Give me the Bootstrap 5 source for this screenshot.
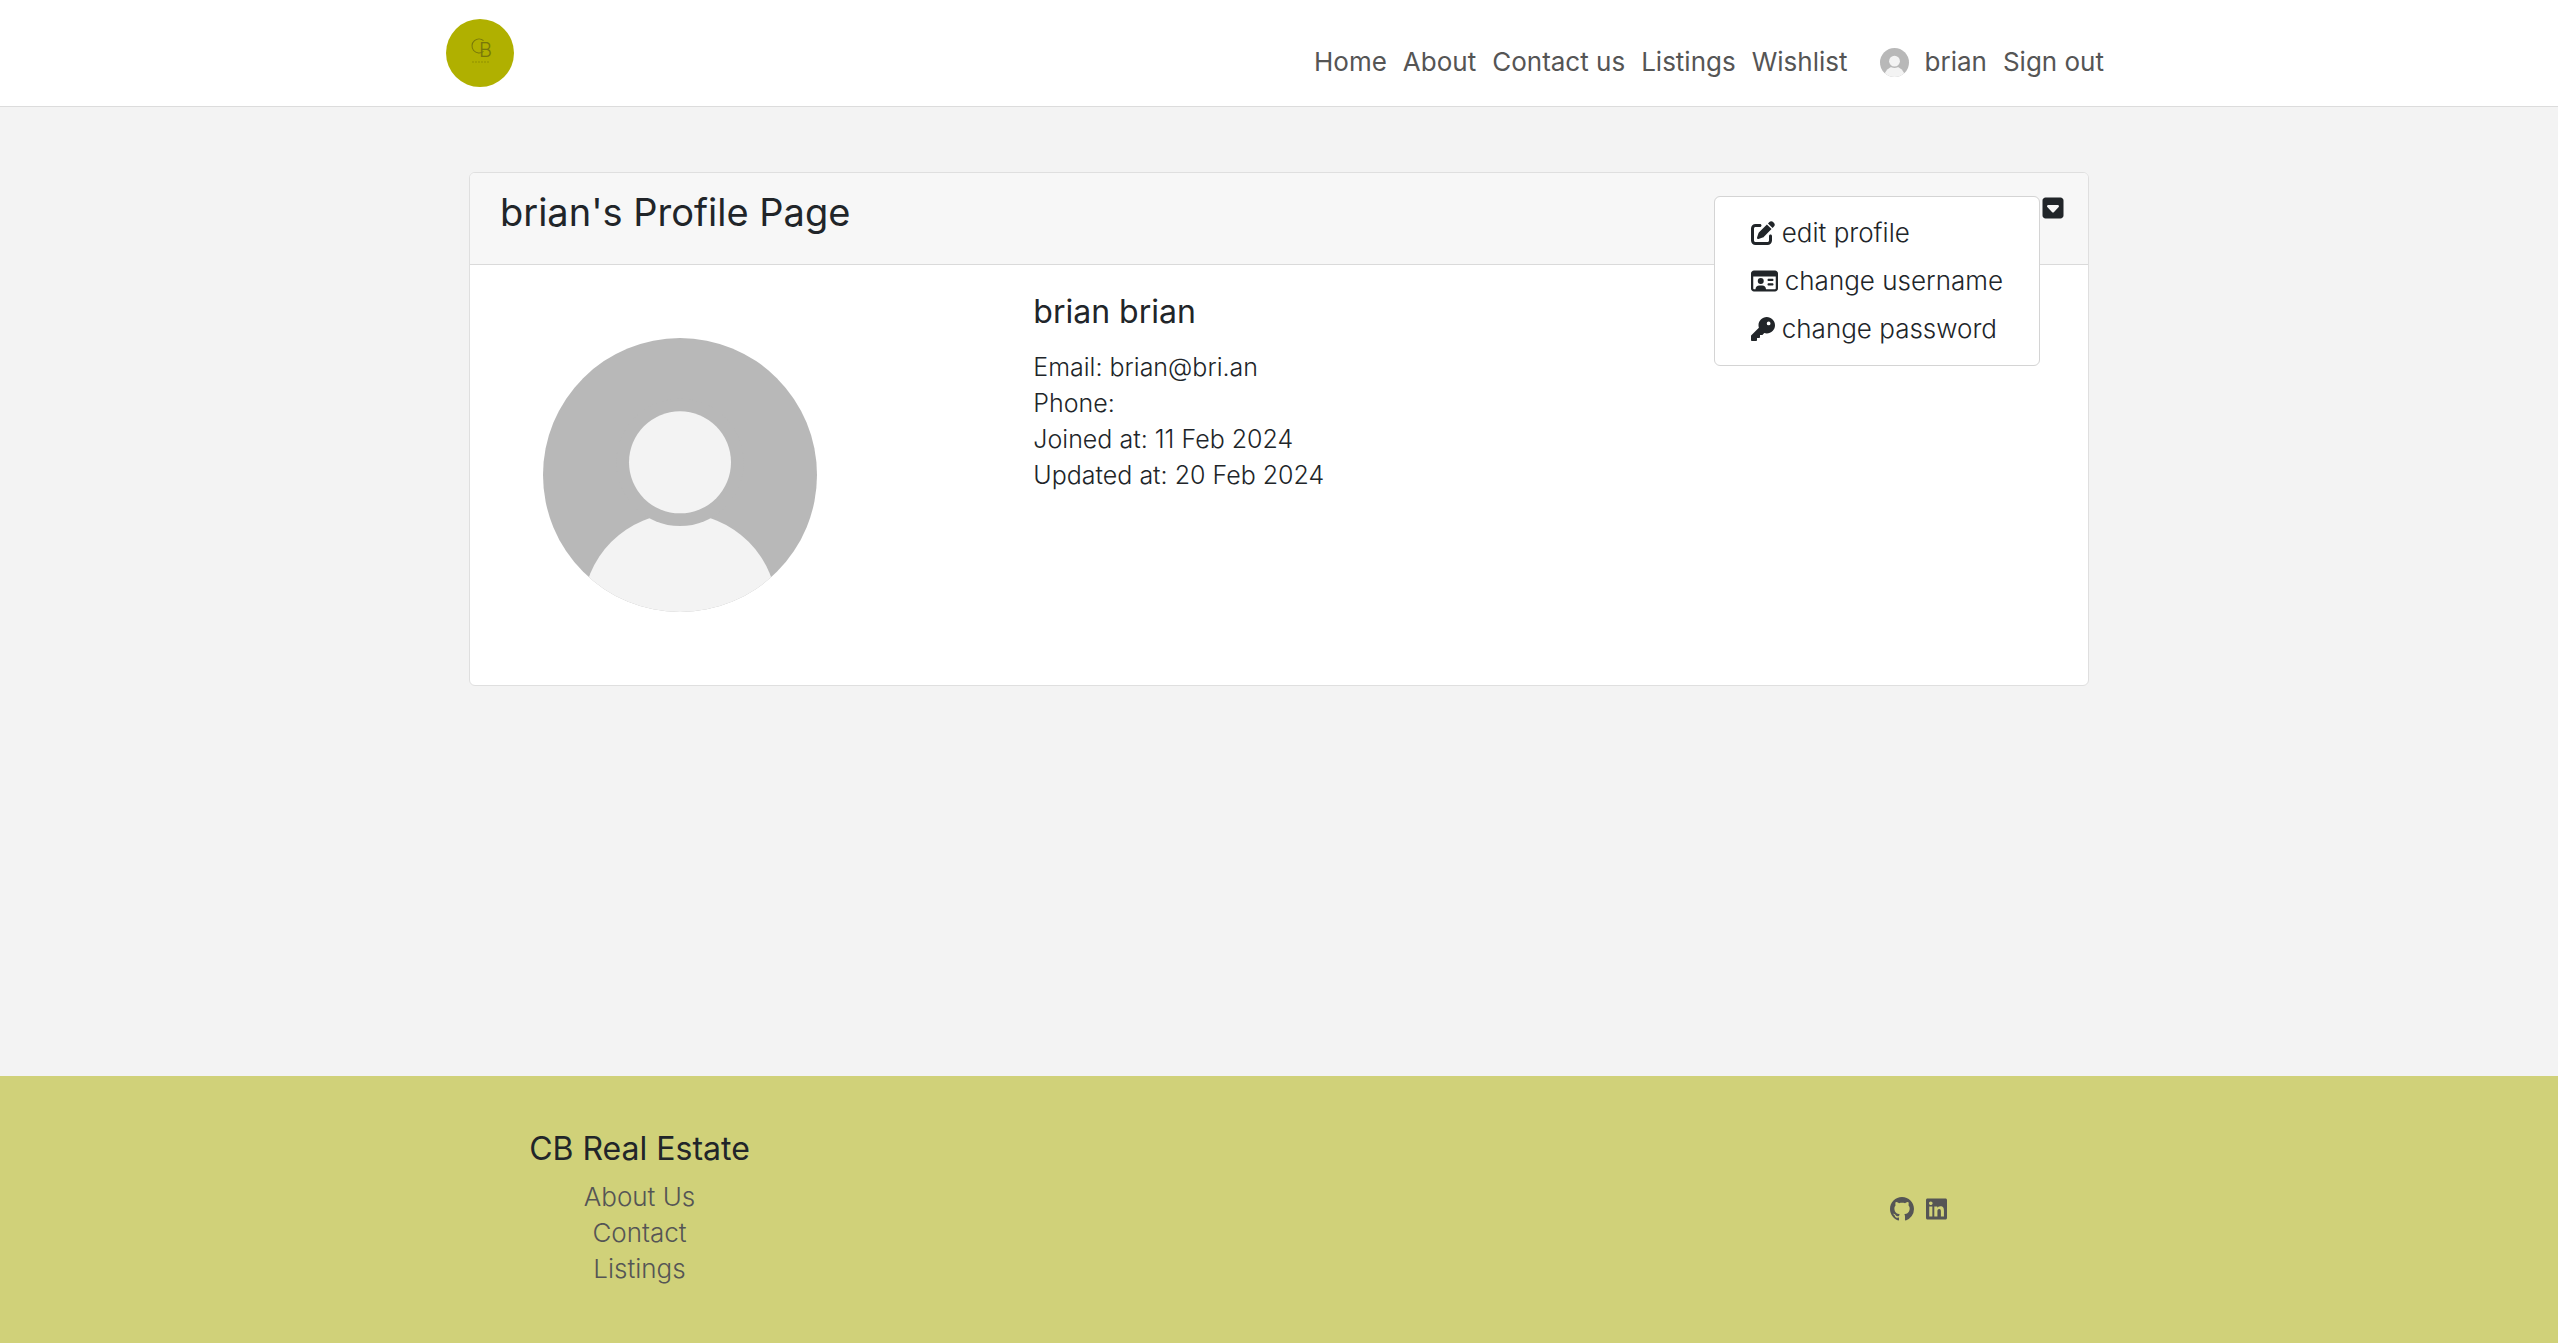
<!DOCTYPE html>
<html lang="en">
<head>
<meta charset="utf-8">
<meta name="viewport" content="width=device-width, initial-scale=1">
<title>brian's Profile Page</title>
<link href="https://cdn.jsdelivr.net/npm/bootstrap@5.3.0/dist/css/bootstrap.min.css" rel="stylesheet">
<style>
  body { font-family: Inter, "Liberation Sans", sans-serif; font-size: 26px; font-weight: 300; line-height: 36px; color: #212529; background: #f3f3f3; }
  a { color: #555; text-decoration: none; }
  a:hover { color: #212529; }
  .site-width { width: 100%; max-width: 1650px; margin: 0 auto; }
  .site-header { background: #fff; border-bottom: 1px solid #dcdcdc; min-height: 107px; padding-top: 19px; }
  .brand-logo { width: 68px; height: 68px; margin-left: -8px; }
  .site-nav { gap: 16px; font-size: 26px; font-weight: 400; padding-top: 18px; }
  .site-nav .nav-link { padding: 0; color: #555; }
  .mini-avatar { width: 29px; height: 29px; margin-left: 16px; }
  .mini-avatar, .big-avatar { border-radius: 50%; }
  .site-main { padding: 65px 15px; }
  .profile-card { border: 1px solid #dfdfdf; border-radius: 6px; }
  .profile-card > .card-header { background: #f7f7f7; border-color: #dadada; padding: 18px 24px 30px 30px; }
  .page-title { font-size: 38px; line-height: 43px; font-weight: 400; margin: 0; }
  .menu-toggle { display: block; border: 0; background: none; padding: 0; color: #212529; line-height: 0; margin-top: 5px; }
  .menu-toggle svg { width: 22px; height: 24px; }
  .profile-menu { display: block; top: 0; right: 100%; margin: 5px 2px 0 0; width: max-content; padding: 12px 22px; font-size: inherit; border: 1px solid #d4d4d4; border-radius: 6px; }
  .profile-menu .dropdown-item { display: flex; align-items: center; gap: 7px; padding: 6px 14px; font-weight: 300; color: #212529; }
  .profile-menu svg { height: 24px; }
  .profile-body { font-size: 25px; padding: 29px 24px; }
  .big-avatar { width: 274px; height: 274px; margin: 73px; }
  .person-name { font-size: 32px; line-height: 36px; font-weight: 400; margin-bottom: 19px; }
  .site-footer { background: #d0d179; padding: 55px 0 56px; }
  .site-footer h2 { font-size: 32px; line-height: 36px; font-weight: 400; margin-bottom: 12px; }
  .social svg { height: 24px; }
</style>
</head>
<body class="d-flex flex-column min-vh-100">

<svg class="d-none" aria-hidden="true">
  <symbol id="avatar" viewBox="0 0 822 822">
    <rect width="822" height="822" fill="#b8b8b8"/>
    <circle cx="411" cy="817" r="291" fill="#f3f3f3"/>
    <circle cx="411" cy="373" r="191" fill="#b8b8b8"/>
    <circle cx="411" cy="373" r="153" fill="#f3f3f3"/>
  </symbol>
</svg>

<header class="site-header">
  <div class="site-width d-flex align-items-center justify-content-between pb-3">
    <a href="#" aria-label="CB Real Estate">
      <svg class="brand-logo d-block" viewBox="0 0 68 68" fill="none" stroke="#77770a">
        <circle cx="34" cy="34" r="34" fill="#b0b000" stroke="none"/>
        <circle cx="33" cy="27" r="7" pathLength="360" stroke-dasharray="260 100" transform="rotate(50 33 27)"/>
        <text x="33" y="38" font-family="Inter, sans-serif" font-size="20" font-weight="300" fill="#77770a" stroke="none">B</text>
        <path d="M26 43h18" stroke="#909000" stroke-dasharray="2 1"/>
      </svg>
    </a>
    <nav class="site-nav nav align-items-center" aria-label="Main">
      <a class="nav-link" href="#">Home</a>
      <a class="nav-link" href="#">About</a>
      <a class="nav-link" href="#">Contact us</a>
      <a class="nav-link" href="#">Listings</a>
      <a class="nav-link" href="#">Wishlist</a>
      <a class="nav-link d-flex align-items-center gap-3" href="#"><svg class="mini-avatar"><use href="#avatar"/></svg>brian</a>
      <a class="nav-link" href="#">Sign out</a>
    </nav>
  </div>
</header>

<main class="site-main site-width flex-grow-1">
  <section class="card profile-card">
    <div class="card-header d-flex justify-content-between align-items-start">
      <h1 class="page-title">brian's Profile Page</h1>
      <div class="position-relative">
        <button class="menu-toggle" type="button" aria-label="Profile options" aria-expanded="true">
          <svg viewBox="0 0 448 512" fill="currentColor"><path d="M384 480c35.3 0 64-28.7 64-64l0-320c0-35.3-28.7-64-64-64L64 32C28.7 32 0 60.7 0 96L0 416c0 35.3 28.7 64 64 64l320 0zM224 352c-6.7 0-13-2.8-17.6-7.7l-104-112c-6.5-7-8.2-17.2-4.4-25.9s12.5-14.4 22-14.4l208 0c9.5 0 18.2 5.7 22 14.4s2.1 18.9-4.4 25.9l-104 112c-4.5 4.9-10.9 7.7-17.6 7.7z"/></svg>
        </button>
        <div class="dropdown-menu profile-menu">
          <a class="dropdown-item" href="#"><svg viewBox="0 0 512 512" fill="currentColor"><path d="M471.6 21.7c-21.9-21.9-57.3-21.9-79.2 0L362.3 51.7l97.9 97.9 30.1-30.1c21.9-21.9 21.9-57.3 0-79.2L471.6 21.7zm-299.2 220c-6.1 6.1-10.8 13.6-13.5 21.9l-29.6 88.8c-2.9 8.6-.6 18.1 5.8 24.6s15.9 8.7 24.6 5.8l88.8-29.6c8.2-2.7 15.7-7.4 21.9-13.5L437.7 172.3 339.7 74.3 172.4 241.7zM96 64C43 64 0 107 0 160V416c0 53 43 96 96 96H352c53 0 96-43 96-96V320c0-17.7-14.3-32-32-32s-32 14.3-32 32v96c0 17.7-14.3 32-32 32H96c-17.7 0-32-14.3-32-32V160c0-17.7 14.3-32 32-32h96c17.7 0 32-14.3 32-32s-14.3-32-32-32H96z"/></svg>edit profile</a>
          <a class="dropdown-item" href="#"><svg viewBox="0 0 576 512" fill="currentColor"><path d="M528 160V416c0 8.8-7.2 16-16 16H320c0-44.2-35.8-80-80-80H176c-44.2 0-80 35.8-80 80H64c-8.8 0-16-7.2-16-16V160H528zM64 32C28.7 32 0 60.7 0 96V416c0 35.3 28.7 64 64 64H512c35.3 0 64-28.7 64-64V96c0-35.3-28.7-64-64-64H64zM272 256a64 64 0 1 0 -128 0 64 64 0 1 0 128 0zm104-48c-13.3 0-24 10.7-24 24s10.7 24 24 24h80c13.3 0 24-10.7 24-24s-10.7-24-24-24H376zm0 96c-13.3 0-24 10.7-24 24s10.7 24 24 24h80c13.3 0 24-10.7 24-24s-10.7-24-24-24H376z"/></svg>change username</a>
          <a class="dropdown-item" href="#"><svg viewBox="0 0 512 512" fill="currentColor"><path d="M336 352c97.2 0 176-78.8 176-176S433.2 0 336 0S160 78.8 160 176c0 18.7 2.9 36.8 8.3 53.7L7 391c-4.5 4.5-7 10.6-7 17v80c0 13.3 10.7 24 24 24h80c13.3 0 24-10.7 24-24V448h40c13.3 0 24-10.7 24-24V384h40c6.4 0 12.5-2.5 17-7l33.3-33.3c16.9 5.4 35 8.3 53.7 8.3zM376 96a40 40 0 1 1 0 80 40 40 0 1 1 0-80z"/></svg>change password</a>
        </div>
      </div>
    </div>
    <div class="row g-0">
      <div class="col-md-4">
        <svg class="big-avatar d-block" role="img" aria-label="Profile picture"><use href="#avatar"/></svg>
      </div>
      <div class="col-md-8 profile-body">
        <h2 class="person-name">brian brian</h2>
        <div>Email: brian@bri.an</div>
        <div>Phone:</div>
        <div>Joined at: 11 Feb 2024</div>
        <div>Updated at: 20 Feb 2024</div>
      </div>
    </div>
  </section>
</main>

<footer class="site-footer">
  <div class="row g-0 text-center align-items-center">
    <div class="col-6">
      <h2>CB Real Estate</h2>
      <ul class="list-unstyled mb-0">
        <li><a href="#">About Us</a></li>
        <li><a href="#">Contact</a></li>
        <li><a href="#">Listings</a></li>
      </ul>
    </div>
    <div class="col-6 social d-flex justify-content-center">
      <a class="d-flex me-2 pe-1" href="#" aria-label="GitHub"><svg viewBox="0 0 16 16" fill="currentColor"><path d="M8 0C3.58 0 0 3.58 0 8c0 3.54 2.29 6.53 5.47 7.59.4.07.55-.17.55-.38 0-.19-.01-.82-.01-1.49-2.01.37-2.53-.49-2.69-.94-.09-.23-.48-.94-.82-1.13-.28-.15-.68-.52-.01-.53.63-.01 1.08.58 1.23.82.72 1.21 1.87.87 2.33.66.07-.52.28-.87.51-1.07-1.78-.2-3.64-.89-3.64-3.95 0-.87.31-1.59.82-2.15-.08-.2-.36-1.02.08-2.12 0 0 .67-.21 2.2.82.64-.18 1.32-.27 2-.27.68 0 1.36.09 2 .27 1.53-1.04 2.2-.82 2.2-.82.44 1.1.16 1.92.08 2.12.51.56.82 1.27.82 2.15 0 3.07-1.87 3.75-3.65 3.95.29.25.54.73.54 1.48 0 1.07-.01 1.93-.01 2.2 0 .21.15.46.55.38A8.012 8.012 0 0 0 16 8c0-4.42-3.58-8-8-8z"/></svg></a>
      <a class="d-flex" href="#" aria-label="LinkedIn"><svg viewBox="0 0 448 512" fill="currentColor"><path d="M416 32H31.9C14.3 32 0 46.5 0 64.3v383.4C0 465.5 14.3 480 31.9 480H416c17.6 0 32-14.5 32-32.3V64.3c0-17.8-14.4-32.3-32-32.3zM135.4 416H69V202.2h66.5V416zm-33.2-243c-21.3 0-38.5-17.3-38.5-38.5S80.9 96 102.2 96c21.2 0 38.5 17.3 38.5 38.5 0 21.3-17.2 38.5-38.5 38.5zm282.1 243h-66.4V312c0-24.8-.5-56.7-34.5-56.7-34.6 0-39.9 27-39.9 54.9V416h-66.4V202.2h63.7v29.2h.9c8.9-16.8 30.6-34.5 62.2-34.5 66.5 0 78.9 43.8 78.9 100.9V416z"/></svg></a>
    </div>
  </div>
</footer>

<script src="https://cdn.jsdelivr.net/npm/bootstrap@5.3.0/dist/js/bootstrap.bundle.min.js"></script>
</body>
</html>
